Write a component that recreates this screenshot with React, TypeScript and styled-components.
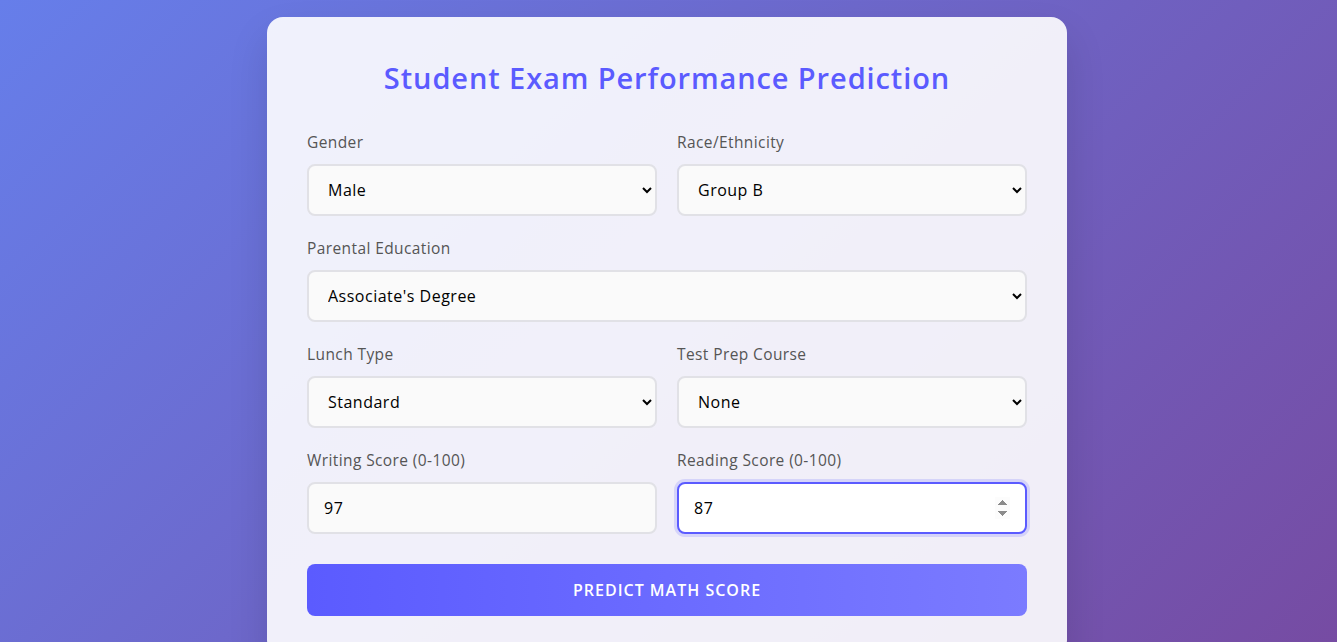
import React, { useState } from "react";
import styled, { createGlobalStyle } from "styled-components";

const GlobalStyle = createGlobalStyle`
  html, body { margin: 0; padding: 0; }
  body {
    font-family: "Open Sans", "Noto Sans", Arial, sans-serif;
    background: linear-gradient(135deg, #667eea 0%, #764ba2 100%);
    min-height: 100vh;
    overflow: hidden;
  }
  * { box-sizing: border-box; }
`;

const Page = styled.div`
  display: flex;
  justify-content: center;
  padding: 17px 3px 0 0;
  min-height: 100vh;
`;

const Card = styled.div`
  width: 800px;
  background: rgba(255, 255, 255, 0.9);
  border-radius: 16px;
  padding: 40px;
  box-shadow: 0 20px 40px rgba(0, 0, 0, 0.12);
  align-self: flex-start;
`;

const Title = styled.h1`
  margin: 0 0 32px;
  text-align: center;
  font-size: 29px;
  line-height: 42px;
  font-weight: 600;
  letter-spacing: 0.9px;
  color: #5b5bff;
`;

const Row = styled.div`
  display: grid;
  grid-template-columns: 1fr 1fr;
  gap: 20px;
`;

const Field = styled.div`
  display: flex;
  flex-direction: column;
  margin-bottom: 21px;
`;

const Label = styled.label`
  font-size: 15.5px;
  line-height: 22px;
  letter-spacing: 0.4px;
  color: #555;
  margin-bottom: 11px;
`;

const Select = styled.select`
  height: 52px;
  padding: 0 12px 0 15px;
  font-family: inherit;
  font-size: 16px;
  letter-spacing: 0.5px;
  color: #000;
  border: 2px solid #e1e1e6;
  border-radius: 8px;
  background: #fafafa;
  outline: none;
`;

const Input = styled.input<{ $focused?: boolean }>`
  height: 52px;
  padding: 0 15px;
  font-family: inherit;
  font-size: 16px;
  letter-spacing: 0.5px;
  color: #000;
  border: 2px solid ${(p) => (p.$focused ? "#5b5bff" : "#e1e1e6")};
  border-radius: 8px;
  background: ${(p) => (p.$focused ? "#fff" : "#fafafa")};
  box-shadow: ${(p) => (p.$focused ? "0 0 0 3px rgba(91, 91, 255, 0.18)" : "none")};
  outline: none;
`;

const Button = styled.button`
  width: 100%;
  height: 52px;
  margin-top: 9px;
  border: none;
  border-radius: 8px;
  background: linear-gradient(90deg, #5b5bff 0%, #7b7bff 100%);
  color: #fff;
  font-family: inherit;
  font-size: 16px;
  font-weight: 600;
  letter-spacing: 1px;
  text-transform: uppercase;
  cursor: pointer;
`;

export default function App() {
  const [writing, setWriting] = useState("97");
  const [reading, setReading] = useState("87");
  return (
    <>
      <GlobalStyle />
      <Page>
        <Card>
          <Title>Student Exam Performance Prediction</Title>
          <Row>
            <Field>
              <Label>Gender</Label>
              <Select defaultValue="male">
                <option value="male">Male</option>
                <option value="female">Female</option>
              </Select>
            </Field>
            <Field>
              <Label>Race/Ethnicity</Label>
              <Select defaultValue="b">
                <option value="a">Group A</option>
                <option value="b">Group B</option>
                <option value="c">Group C</option>
                <option value="d">Group D</option>
                <option value="e">Group E</option>
              </Select>
            </Field>
          </Row>
          <Field>
            <Label>Parental Education</Label>
            <Select defaultValue="assoc">
              <option value="assoc">Associate's Degree</option>
              <option value="bach">Bachelor's Degree</option>
              <option value="hs">High School</option>
              <option value="master">Master's Degree</option>
              <option value="college">Some College</option>
              <option value="shs">Some High School</option>
            </Select>
          </Field>
          <Row>
            <Field>
              <Label>Lunch Type</Label>
              <Select defaultValue="standard">
                <option value="standard">Standard</option>
                <option value="free">Free/Reduced</option>
              </Select>
            </Field>
            <Field>
              <Label>Test Prep Course</Label>
              <Select defaultValue="none">
                <option value="none">None</option>
                <option value="completed">Completed</option>
              </Select>
            </Field>
          </Row>
          <Row>
            <Field>
              <Label>Writing Score (0-100)</Label>
              <Input type="number" value={writing} onChange={(e) => setWriting(e.target.value)} />
            </Field>
            <Field>
              <Label>Reading Score (0-100)</Label>
              <Input
                $focused
                autoFocus
                type="number"
                value={reading}
                onChange={(e) => setReading(e.target.value)}
              />
            </Field>
          </Row>
          <Button type="button">Predict Math Score</Button>
        </Card>
      </Page>
    </>
  );
}
